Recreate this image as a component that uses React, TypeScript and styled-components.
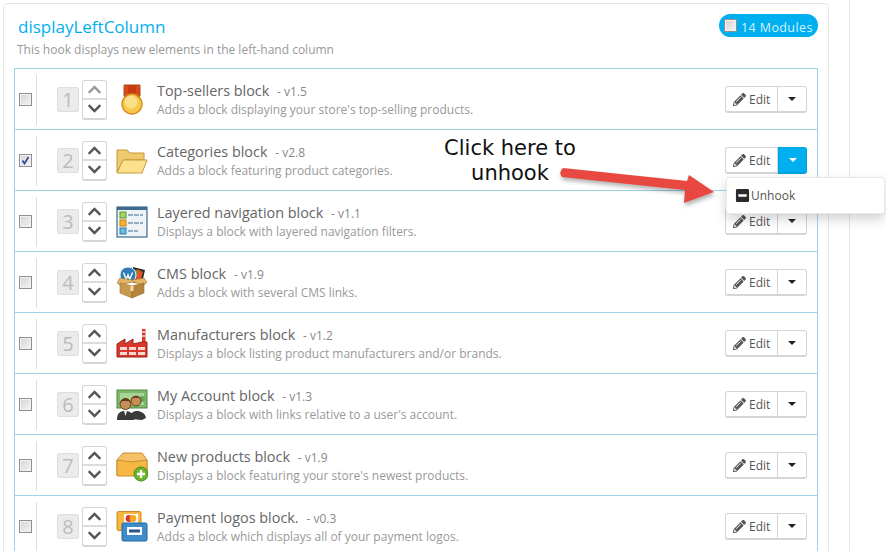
import React from "react"
import styled, { createGlobalStyle } from "styled-components"
import { FaChevronDown, FaChevronUp, FaMinusSquare, FaPencilAlt } from "react-icons/fa"

const GlobalStyle = createGlobalStyle`
  html, body {
    margin: 0;
    height: 551px;
    overflow: hidden;
    background: #fff;
    font-family: "Open Sans", "Liberation Sans", sans-serif;
  }
`

const Page = styled.div`
  position: relative;
  width: 886px;
  height: 551px;
  overflow: hidden;
`

const Column = styled.div`
  width: 850px;
  height: 551px;
  padding: 3px 0 0 3px;
  box-sizing: border-box;
  border-right: 1px solid #e6e6e6;
`

const Panel = styled.section`
  width: 826px;
  box-sizing: border-box;
  padding: 11px 10px 0 10px;
  border: 1px solid #e6e6e6;
  border-bottom: 0;
  border-radius: 5px 5px 0 0;
`

const PanelHead = styled.header`
  display: flex;
  justify-content: space-between;
  align-items: flex-start;
  height: 53px;
`

const Title = styled.h3`
  margin: 0;
  padding-left: 4px;
  font-size: 17px;
  font-weight: 400;
  line-height: 24px;
  color: #00aff0;
`

const Hint = styled.p`
  margin: 3px 0 0 3px;
  font-size: 12px;
  line-height: 16px;
  color: #999;
`

const Badge = styled.div`
  display: flex;
  align-items: center;
  gap: 4px;
  height: 23px;
  width: 99px;
  box-sizing: border-box;
  margin-top: -1px;
  padding-left: 5px;
  border-radius: 12px;
  background: #00aff0;
  font-size: 12.5px;
  letter-spacing: 0.4px;
  color: #d6f3ff;
  white-space: nowrap;
`

const BadgeText = styled.span`
  margin-top: 3px;
`

const List = styled.ul`
  margin: 0;
  padding: 0;
  list-style: none;
  border: 1px solid #9fd3ea;
  border-bottom: 0;
`

const Row = styled.li`
  display: flex;
  align-items: center;
  height: 59px;
  padding-top: 1px;
  border-bottom: 1px solid #9fd3ea;
`

const CheckCell = styled.div`
  display: flex;
  align-items: center;
  width: 22px;
  height: 50px;
  box-sizing: border-box;
  padding-left: 4px;
  border-right: 1px solid #ddd;
  flex-shrink: 0;
`

const Box = styled.span<{ $checked?: boolean }>`
  display: flex;
  align-items: center;
  justify-content: center;
  width: 13px;
  height: 13px;
  box-sizing: border-box;
  border: 1px solid #8e8e8e;
  background: linear-gradient(135deg, #d4d4d4, #f4f4f4);
  box-shadow: inset 0 0 0 1px #f2f2f2;
  flex-shrink: 0;

  svg {
    display: ${(p) => (p.$checked ? "block" : "none")};
  }
`

const Position = styled.div`
  display: flex;
  align-items: center;
  justify-content: center;
  width: 22px;
  height: 25px;
  margin: 0 3px 0 20px;
  border-radius: 3px;
  background: #ebebeb;
  box-shadow: inset 0 0 0 1px #dedede;
  font-size: 20px;
  color: #bcbcbc;
  flex-shrink: 0;
`

const Arrows = styled.div`
  display: flex;
  flex-direction: column;
  width: 25px;
  height: 40px;
  box-sizing: border-box;
  border: 1px solid #d5d5d5;
  border-bottom-width: 2px;
  border-radius: 3px;
  flex-shrink: 0;
`

const ArrowButton = styled.span<{ $muted?: boolean; $split?: boolean }>`
  display: flex;
  align-items: center;
  justify-content: center;
  flex: 1;
  font-size: 15px;
  color: ${(p) => (p.$muted ? "#9a9a9a" : "#555")};
  border-bottom: ${(p) => (p.$split ? "2px solid #dcdcdc" : "0")};
`

const IconCell = styled.div`
  display: flex;
  align-items: center;
  justify-content: center;
  width: 32px;
  height: 32px;
  margin: 0 9px;
  flex-shrink: 0;
`

const Info = styled.div`
  flex: 1;
  min-width: 0;
  margin-top: -2px;
`

const Name = styled.div`
  font-size: 14.4px;
  line-height: 20px;
  color: #666;
`

const Version = styled.span`
  margin-left: 4px;
  font-size: 12px;
  color: #888;
`

const Description = styled.div`
  font-size: 12px;
  line-height: 15px;
  color: #999;
`

const ButtonGroup = styled.div`
  display: flex;
  height: 27px;
  margin-right: 10px;
  box-sizing: border-box;
  flex-shrink: 0;
`

const EditButton = styled.div`
  display: flex;
  align-items: center;
  gap: 3px;
  width: 53px;
  box-sizing: border-box;
  padding-left: 7px;
  border: 1px solid #d5d5d5;
  border-bottom-width: 2px;
  border-radius: 3px 0 0 3px;
  font-size: 12px;
  color: #555;
`

const CaretButton = styled.div<{ $open?: boolean }>`
  display: flex;
  align-items: center;
  justify-content: center;
  width: 29px;
  box-sizing: border-box;
  border: 1px solid ${(p) => (p.$open ? "#00a3e0" : "#d5d5d5")};
  border-left-width: ${(p) => (p.$open ? "1px" : "0")};
  border-bottom-width: 2px;
  border-radius: 0 3px 3px 0;
  background: ${(p) => (p.$open ? "#00aff0" : "#fff")};
  color: ${(p) => (p.$open ? "#fff" : "#222")};

  &::after {
    content: "";
    border-top: 4px solid currentColor;
    border-left: 4px solid transparent;
    border-right: 4px solid transparent;
  }
`

const Menu = styled.div`
  position: absolute;
  left: 726px;
  top: 177px;
  display: flex;
  align-items: center;
  gap: 1px;
  width: 159px;
  height: 37px;
  box-sizing: border-box;
  padding-left: 8px;
  background: #fff;
  border: 1px solid #e8e8e8;
  border-radius: 3px;
  box-shadow: 0 5px 12px rgba(0, 0, 0, 0.18);
  font-size: 12px;
  color: #555;

  svg {
    color: #2a2a2a;
    font-size: 15px;
  }
`

const Callout = styled.div`
  position: absolute;
  left: 420px;
  top: 136px;
  width: 180px;
  font-family: "DejaVu Sans", Verdana, sans-serif;
  font-size: 21px;
  line-height: 25px;
  text-align: center;
  color: #111;
`

const ArrowDrawing = styled.svg`
  position: absolute;
  left: 550px;
  top: 160px;
  filter: drop-shadow(1px 3px 2px rgba(0, 0, 0, 0.3));
`

const Medal = () => (
  <svg width="32" height="32" viewBox="0 0 32 32">
    <path d="M8 1h16v11l-4 3h-8l-4-3z" fill="#d9481c" stroke="#a8501a" />
    <rect x="12" y="1" width="8" height="12" fill="#c93a12" />
    <circle cx="16" cy="20" r="10" fill="#f7c948" stroke="#d68a1e" strokeWidth="1.4" />
    <circle cx="15" cy="18" r="6.5" fill="#fbe08a" />
  </svg>
)

const Folder = () => (
  <svg width="32" height="32" viewBox="0 0 32 32">
    <path d="M1 27V5h10l3 3h14v7H8z" fill="#eeca6c" stroke="#c8973a" />
    <path d="M1 28l6-13h24l-5 13z" fill="#fbe08e" stroke="#c8973a" strokeLinejoin="round" />
  </svg>
)

const Layers = () => (
  <svg width="32" height="32" viewBox="0 0 32 32">
    <rect x="1" y="1" width="30" height="30" fill="#eef3f7" stroke="#3f6a8c" strokeWidth="1.2" />
    <rect x="1" y="1" width="30" height="3" fill="#3f6a8c" />
    <rect x="4" y="6" width="6" height="6" fill="#a8d36a" stroke="#5f9a2a" />
    <rect x="4" y="14" width="6" height="6" fill="#fbb42e" stroke="#c97f10" />
    <rect x="4" y="22" width="6" height="6" fill="#6bbbe8" stroke="#2d7fb4" />
    <path d="M12 9h15M12 17h15M12 25h10" stroke="#3f6a8c" strokeWidth="1" strokeDasharray="5 1" />
  </svg>
)

const CmsBox = () => (
  <svg width="32" height="32" viewBox="0 0 32 32">
    <path d="M17 0l12 3-3 13H17z" fill="#2b2b2b" />
    <path d="M21 2l6 3-3 10h-6z" fill="#e2542a" />
    <path d="M17 2l5 2-3 8-3-2z" fill="#6ba52e" />
    <circle cx="12" cy="8" r="8" fill="#2f7bb8" stroke="#e8f1f8" />
    <path d="M7.5 5.5l2.7 7L12 8l1.7 4.5L16.5 5.5" fill="none" stroke="#fff" strokeWidth="1.4" />
    <path d="M16 13L4 11l-3 5 3 2 12-3 12 3 3-3-3-4z" fill="#e3b565" stroke="#9a6c2a" strokeWidth="0.6" />
    <path d="M4 16l12 3v12L4 26z" fill="#c99a4e" stroke="#9a6c2a" strokeWidth="0.6" />
    <path d="M28 16l-12 3v12l12-5z" fill="#b5843c" stroke="#9a6c2a" strokeWidth="0.6" />
    <rect x="14.5" y="19" width="3" height="5" fill="#f1dcae" />
  </svg>
)

const Factory = () => (
  <svg width="32" height="32" viewBox="0 0 32 32">
    <rect x="26" y="1" width="3.5" height="14" fill="#d8392c" />
    <path d="M26 4h3.5M26 8h3.5" stroke="#f6d5d0" strokeWidth="1.4" />
    <path d="M1 29V16l8-5v5l8-5v5l9-2h5v15z" fill="#d8392c" stroke="#9e2318" strokeLinejoin="round" />
    <path d="M4 19h7v3H4zM13 19h7v3h-7zM22 19h7v3h-7zM4 24h7v3H4zM13 24h7v3h-7zM22 24h7v3h-7z" fill="#f8d8d2" />
  </svg>
)

const Account = () => (
  <svg width="32" height="32" viewBox="0 0 32 32">
    <rect x="1" y="1" width="30" height="18" fill="#7fb86a" stroke="#4e8a3e" />
    <rect x="4" y="4" width="24" height="12" fill="#a8d696" />
    <circle cx="26" cy="10" r="3" fill="#6aa655" />
    <path d="M14 30c0-6 3-8 7-8s8 2 9 7l-4 2z" fill="#3a3a3a" />
    <circle cx="20" cy="12" r="5" fill="#c98e56" stroke="#6b4423" />
    <path d="M15 11c0-5 10-5 10 0l-2-2h-6z" fill="#6b4423" />
    <path d="M1 31c0-7 3-9 8-9s9 2 9 9z" fill="#3a3a3a" />
    <circle cx="9.5" cy="15" r="5.5" fill="#c98e56" stroke="#6b4423" />
    <path d="M4.5 14c0-6 10-6 10 0l-2-2h-6z" fill="#5f3a1c" />
    <path d="M8 22h3l-1.5 5z" fill="#f1f1f1" />
  </svg>
)

const NewBox = () => (
  <svg width="32" height="32" viewBox="0 0 32 32">
    <path d="M1 10l6-7h19l5 7v15H1z" fill="#f4c166" stroke="#c98f2e" strokeLinejoin="round" />
    <path d="M1 10l15 2 15-2v16H1z" fill="#f6b744" stroke="#c98f2e" />
    <circle cx="25" cy="24" r="7" fill="#6db52a" stroke="#4a8a17" />
    <path d="M25 20v8M21 24h8" stroke="#fff" strokeWidth="2.4" />
  </svg>
)

const Cards = () => (
  <svg width="32" height="32" viewBox="0 0 32 32">
    <rect x="1" y="0.5" width="24" height="19" rx="1.5" fill="#f6b73c" stroke="#c98a26" />
    <rect x="8" y="3" width="14" height="9" fill="#fff" />
    <circle cx="13" cy="7.5" r="3.4" fill="#d8392c" />
    <circle cx="17" cy="7.5" r="3.4" fill="#f6a821" />
    <rect x="6" y="12" width="25" height="18" rx="1.5" fill="#3d8ccb" stroke="#23689f" />
    <rect x="11" y="16" width="15" height="8" fill="#fff" />
    <rect x="13" y="18.5" width="11" height="3" fill="#27558e" />
  </svg>
)

const modules = [
  { name: "Top-sellers block", version: "v1.5", text: "Adds a block displaying your store's top-selling products.", Icon: Medal },
  { name: "Categories block", version: "v2.8", text: "Adds a block featuring product categories.", Icon: Folder },
  { name: "Layered navigation block", version: "v1.1", text: "Displays a block with layered navigation filters.", Icon: Layers },
  { name: "CMS block", version: "v1.9", text: "Adds a block with several CMS links.", Icon: CmsBox },
  { name: "Manufacturers block", version: "v1.2", text: "Displays a block listing product manufacturers and/or brands.", Icon: Factory },
  { name: "My Account block", version: "v1.3", text: "Displays a block with links relative to a user's account.", Icon: Account },
  { name: "New products block", version: "v1.9", text: "Displays a block featuring your store's newest products.", Icon: NewBox },
  { name: "Payment logos block.", version: "v0.3", text: "Adds a block which displays all of your payment logos.", Icon: Cards },
]

const Check = () => (
  <svg width="9" height="9" viewBox="0 0 9 9">
    <path d="M1.5 4.5l2 3L7.5 1" fill="none" stroke="#2f3f9e" strokeWidth="1.6" />
  </svg>
)

export default function App() {
  return (
    <>
      <GlobalStyle />
      <Page>
        <Column>
          <Panel>
            <PanelHead>
              <div>
                <Title>displayLeftColumn</Title>
                <Hint>This hook displays new elements in the left-hand column</Hint>
              </div>
              <Badge>
                <Box />
                <BadgeText>14 Modules</BadgeText>
              </Badge>
            </PanelHead>
            <List>
              {modules.map((m, i) => (
                <Row key={m.name}>
                  <CheckCell>
                    <Box $checked={i === 1}>
                      <Check />
                    </Box>
                  </CheckCell>
                  <Position>{i + 1}</Position>
                  <Arrows>
                    <ArrowButton $muted={i === 0} $split>
                      <FaChevronUp />
                    </ArrowButton>
                    <ArrowButton>
                      <FaChevronDown />
                    </ArrowButton>
                  </Arrows>
                  <IconCell>
                    <m.Icon />
                  </IconCell>
                  <Info>
                    <Name>
                      {m.name} <Version>- {m.version}</Version>
                    </Name>
                    <Description>{m.text}</Description>
                  </Info>
                  <ButtonGroup>
                    <EditButton>
                      <FaPencilAlt size={13} />
                      Edit
                    </EditButton>
                    <CaretButton $open={i === 1} />
                  </ButtonGroup>
                </Row>
              ))}
            </List>
          </Panel>
        </Column>
        <Callout>
          Click here to
          <br />
          unhook
        </Callout>
        <ArrowDrawing width="170" height="50" viewBox="0 0 170 50">
          <path
            d="M13 8 L137 21 L139 15 L164 32 L134 43 L135 30 L12 17 Q8 12 13 8 Z"
            fill="#e8483f"
          />
        </ArrowDrawing>
        <Menu>
          <FaMinusSquare />
          Unhook
        </Menu>
      </Page>
    </>
  )
}
